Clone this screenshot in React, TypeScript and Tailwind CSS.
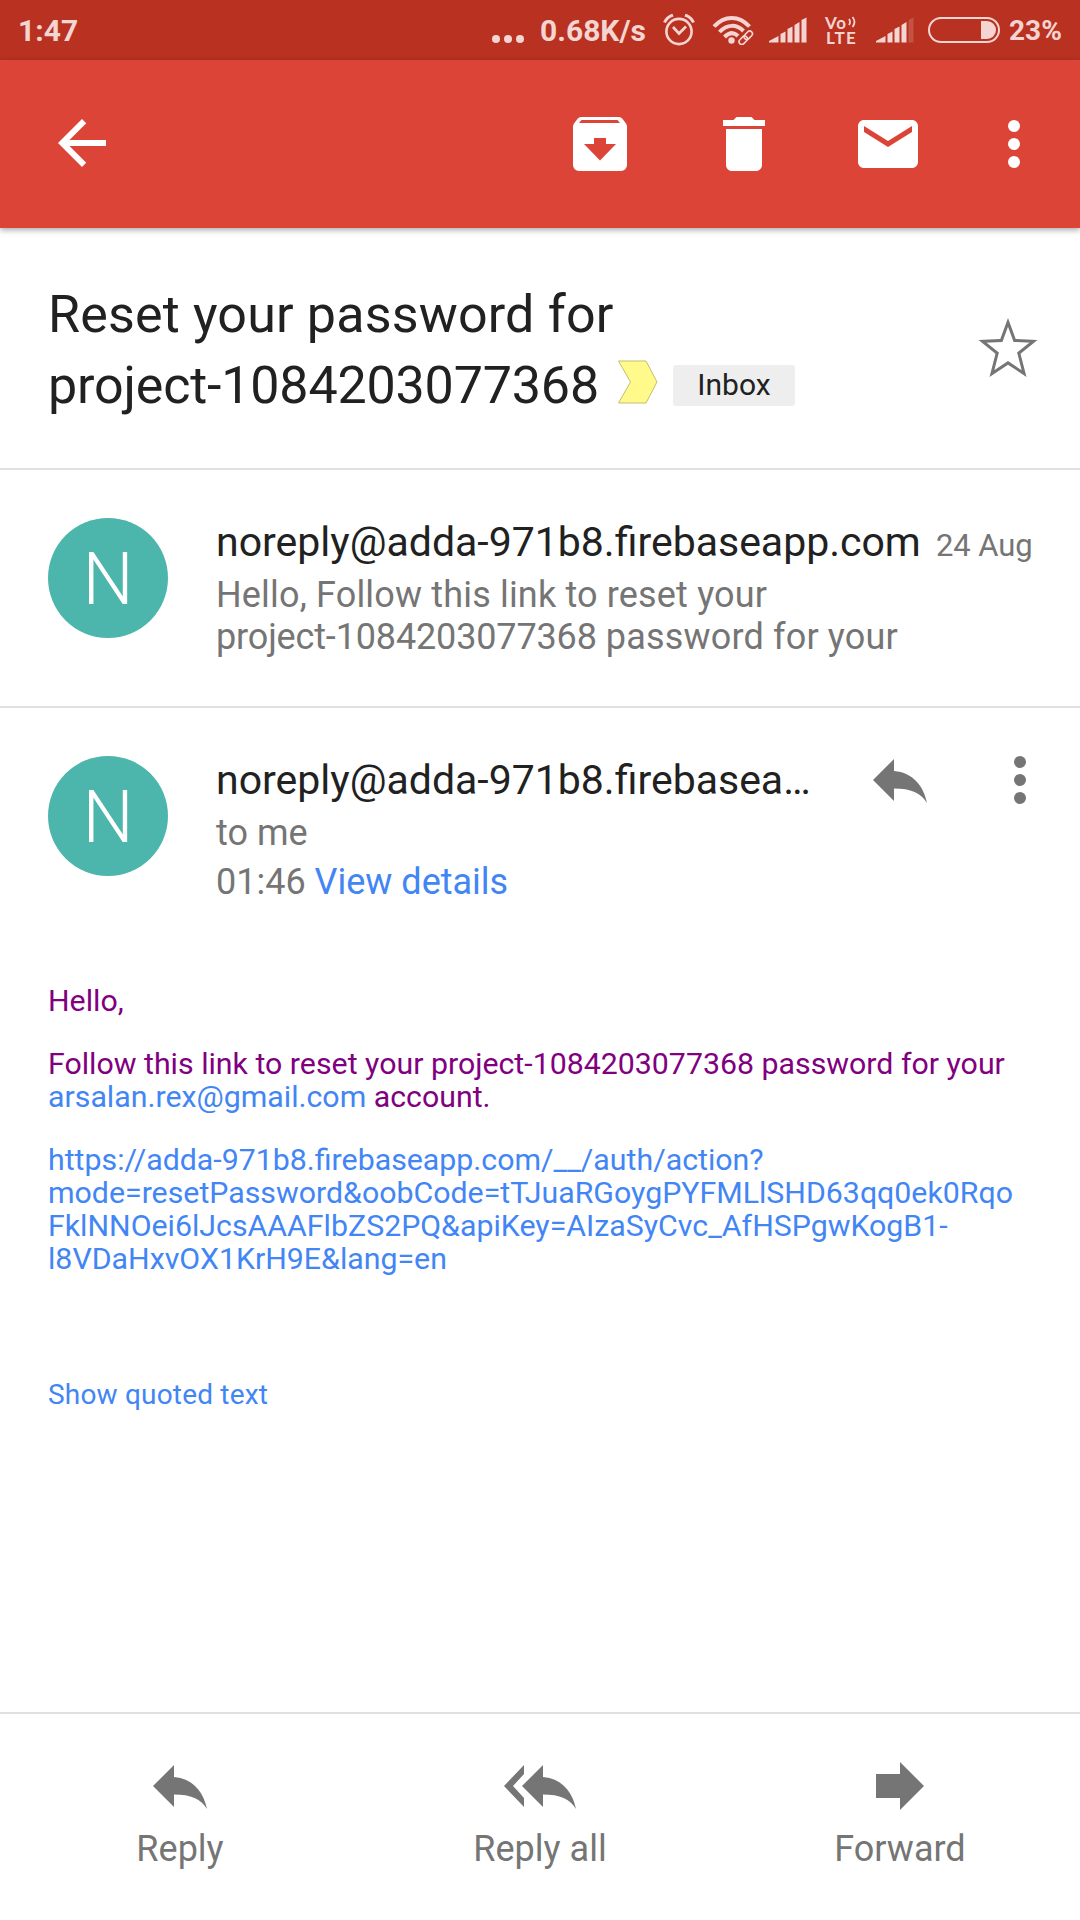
import React from "react";

type IconProps = { className?: string };

const ReplyShape = ({ className }: IconProps) => (
  <svg viewBox="0 0 54 48" className={className} fill="currentColor">
    <path d="M0 23L21 2v12c19 1.500 29.500 15 33 32c-6-10-16-14.500-33-14.500V44z" />
  </svg>
);

const MoreDots = ({ className }: IconProps) => (
  <svg viewBox="0 0 24 24" className={className} fill="currentColor">
    <circle cx="12" cy="6" r="2" />
    <circle cx="12" cy="12" r="2" />
    <circle cx="12" cy="18" r="2" />
  </svg>
);

const Signal = ({ weak }: { weak?: boolean }) => (
  <svg viewBox="0 0 38 26" className="h-[26px] w-[38px]" fill="currentColor">
    <path d="M0 25.500V24L9.500 19v6.500z" />
    <path d="M11.500 25.500V17l5-2.500v11z" />
    <path d="M18.500 25.500V12l5-2.500v16z" />
    <path d="M25.500 25.500V8l5-3v20.500z" />
    <path d="M32.500 25.500V3l5-2.500v25z" opacity={weak ? 0.2 : 1} />
  </svg>
);

const StatusBar = () => (
  <div className="flex h-[60px] items-center bg-[#b93221] pl-[18px] text-[#f4d5d2]">
    <span className="w-[474px] pt-px text-[30px] font-bold leading-[60px]">1:47</span>
    <svg viewBox="0 0 32 8" className="mt-[18px] h-2 w-8" fill="currentColor">
      <circle cx="4" cy="4" r="4" />
      <circle cx="16" cy="4" r="4" />
      <circle cx="28" cy="4" r="4" />
    </svg>
    <span className="ml-4 w-[105px] whitespace-nowrap pt-px text-[30px] font-bold leading-[60px]">0.68K/s</span>
    <svg viewBox="0 0 32 32" className="ml-[18px] h-8 w-8" fill="none" stroke="currentColor" strokeWidth="2.600">
      <circle cx="16" cy="17.500" r="12.600" />
      <path d="M10 13l6 6.500 7-7" />
      <path d="M1.500 8.500c1.500-3.500 4-6 8.500-7.500M30.500 8.500C29 5 26.500 2.500 22 1" strokeWidth="3" />
    </svg>
    <svg viewBox="0 0 42 30" className="ml-[17px] h-[30px] w-[42px]" fill="none" stroke="currentColor" strokeWidth="4">
      <path d="M2 11.500C12.500 0 27 0 37.500 11.500" />
      <path d="M7.500 17C15 9 24.500 9 31.500 16" />
      <path d="M12.500 22C17.500 17 22 17 26 21" />
      <circle cx="19.500" cy="25.500" r="3.200" fill="currentColor" stroke="none" />
      <g strokeWidth="1.600">
        <rect x="31.500" y="17.500" width="9.500" height="5.500" rx="2.750" transform="rotate(-45 36.250 20.250)" />
        <rect x="26.500" y="22.500" width="9.500" height="5.500" rx="2.750" transform="rotate(-45 31.250 25.250)" />
      </g>
    </svg>
    <div className="ml-[15px]"><Signal /></div>
    <div className="ml-[18px] flex w-[33px] flex-col font-['Lato'] text-[17px] font-bold">
      <div className="flex h-[15px] items-center leading-[15px]">
        <span className="w-[23px] tracking-[0.8px]">Vo</span>
        <svg viewBox="0 0 9 12" className="-mt-px h-3 w-[9px]" fill="none" stroke="currentColor" strokeWidth="1.800">
          <path d="M1 3q2 3 0 6M4.500 1q4 5 0 10" />
        </svg>
      </div>
      <span className="h-[15px] pl-px tracking-[1.2px] leading-[15px]">LTE</span>
    </div>
    <div className="ml-[18px]"><Signal weak /></div>
    <svg viewBox="0 0 72 26" className="ml-[14px] h-[26px] w-[72px]">
      <rect x="1" y="1" width="70" height="24" rx="12" fill="none" stroke="currentColor" strokeWidth="2" />
      <path d="M53 4h6a9 9 0 0 1 0 18h-6z" fill="currentColor" />
    </svg>
    <span className="ml-[9px] pt-px text-[28px] font-bold leading-[60px]">23%</span>
  </div>
);

const Toolbar = () => (
  <div className="relative z-10 flex h-[168px] items-start bg-[#dc4437] pt-12 text-white shadow-[0_2px_6px_rgba(0,0,0,0.35)]">
    <svg viewBox="0 0 24 24" className="-mt-px ml-[46px] size-[72px]" fill="currentColor">
      <path d="M20 11H7.830l5.590-5.590L12 4l-8 8 8 8 1.410-1.410L7.830 13H20v-2z" />
    </svg>
    <svg viewBox="0 0 72 72" className="ml-[446px] size-[72px]" fill="currentColor" fillRule="evenodd">
      <path d="M17 9h38q2 0 3.200 1.600L62 15.500q1 1.300 1 3V57a6 6 0 0 1-6 6H15a6 6 0 0 1-6-6V18.500q0-1.700 1-3l3.800-4.900Q15 9 17 9zM17.500 12L15 15h41l-2.500-3zM30 30v6H20l16 16.500L52 36H42v-6z" />
    </svg>
    <svg viewBox="0 0 24 24" className="ml-[72px] size-[72px]" fill="currentColor">
      <path d="M6 19c0 1.100.900 2 2 2h8c1.100 0 2-.900 2-2V7H6v12zM19 4h-3.500l-1-1h-5l-1 1H5v2h14V4z" />
    </svg>
    <svg viewBox="0 0 24 24" className="ml-[72px] size-[72px]" fill="currentColor">
      <path d="M20 4H4c-1.100 0-1.990.900-1.990 2L2 18c0 1.100.900 2 2 2h16c1.100 0 2-.900 2-2V6c0-1.100-.900-2-2-2zm0 4l-8 5-8-5V6l8 5 8-5v2z" />
    </svg>
    <MoreDots className="ml-[54px] size-[72px]" />
  </div>
);

const Subject = () => (
  <div className="flex h-[242px] border-b-2 border-[#e0e0e0] pl-12 pt-[51px]">
    <div className="w-[924px] text-[52px] leading-[71px] text-[#212121]">
      <div className="tracking-[0.17px]">Reset your password for</div>
      <div className="flex items-center">
        <span className="w-[570px] tracking-[-0.17px]">project-1084203077368</span>
        <svg viewBox="0 0 40 44" className="-mt-2 h-[44px] w-[40px]">
          <path d="M.5 1h27.500L39 22 28 43H.5L12.500 22z" fill="#fffa8a" stroke="#c3bf6c" />
        </svg>
        <span className="-mt-px ml-[15px] flex h-[41px] w-[122px] items-center justify-center rounded-[3px] bg-[#eeeeee] text-[30px] leading-[39px] pb-[2px]">Inbox</span>
      </div>
    </div>
    <svg viewBox="0 0 72 72" className="mt-[32px] size-[72px]">
      <defs>
        <clipPath id="star">
          <path d="M36 7l7.700 21 21.800 1-17 13.700L54.500 66 36 53.700 17.500 66l6-23.300L6.500 29l21.800-1z" />
        </clipPath>
      </defs>
      <path clipPath="url(#star)" fill="none" stroke="#757575" strokeWidth="6" d="M36 7l7.700 21 21.800 1-17 13.700L54.500 66 36 53.700 17.500 66l6-23.300L6.500 29l21.800-1z" />
    </svg>
  </div>
);

const Avatar = () => (
  <div className="flex size-[120px] shrink-0 items-center justify-center rounded-full bg-[#4db6ac] pt-[3px] text-[72px] font-light leading-none text-white">
    N
  </div>
);

const ReplyAllIcon = () => (
  <svg viewBox="0 0 72 48" className="relative top-px h-12 w-[72px]" fill="currentColor">
    <path d="M0 23L20 2v9L9 23l11 12v9zM18 23L39 2v12c19 1.500 29.500 15 33 32c-6-10-16-14.500-33-14.500V44z" />
  </svg>
);

const ForwardIcon = () => (
  <svg viewBox="0 0 48 48" className="h-12 w-12" fill="currentColor">
    <path d="M0 12h24V0l24 24-24 24V36H0z" />
  </svg>
);

const Action = ({ label, children }: { label: string; children: React.ReactNode }) => (
  <div className="flex flex-1 flex-col items-center pt-12">
    {children}
    <span className="mt-[18px] text-[36px] leading-[42px]">{label}</span>
  </div>
);

export default function App() {
  return (
    <div className="flex h-[1920px] w-[1080px] flex-col overflow-hidden bg-white font-['Roboto',sans-serif]">
      <StatusBar />
      <Toolbar />
      <Subject />
      <div className="flex h-[238px] border-b-2 border-[#e0e0e0] pl-12 pt-12">
        <Avatar />
        <div className="ml-12 whitespace-nowrap text-[36px] leading-[42px] text-[#757575]">
          <div className="mb-[7px] flex items-baseline">
            <span className="w-[720px] text-[41px] leading-[49px] text-[#212121]">noreply@adda-971b8.firebaseapp.com</span>
            <span className="text-[31px] leading-[36px] tracking-[-0.1px]">24 Aug</span>
          </div>
          <div className="tracking-[0.17px]">Hello, Follow this link to reset your</div>
          <div><span className="tracking-[-0.15px]">project-1084203077368</span><span className="tracking-[0.17px]"> password for your</span></div>
        </div>
      </div>
      <div className="flex h-[226px] pl-12 pt-12">
        <Avatar />
        <div className="ml-12 w-[657px] text-[36px] leading-[49px] text-[#757575]">
          <div className="text-[41px] text-[#212121]">noreply@adda-971b8.firebasea…</div>
          <div className="mt-[4px]">to me</div>
          <div>01:46 <span className="text-[#4285f4]">View details</span></div>
        </div>
        <ReplyShape className="mt-px h-12 w-[54px] text-[#757575]" />
        <MoreDots className="-mt-3 ml-[57px] size-[72px] text-[#757575]" />
      </div>
      <div className="grow pl-12 pt-[50px] text-[30.3px] leading-[33px] text-[#4285f4]">
        <p className="text-[#800080]">Hello,</p>
        <p className="mt-[30px] whitespace-nowrap text-[#800080]">
          Follow this link to reset your project-1084203077368 password for your<br />
          <span className="text-[#4285f4]">arsalan.rex@gmail.com</span> account.
        </p>
        <p className="mt-[30px] whitespace-nowrap">
          https://adda-971b8.firebaseapp.com/__/auth/action?<br />
          mode=resetPassword&amp;oobCode=tTJuaRGoygPYFMLlSHD63qq0ek0Rqo<br />
          FklNNOei6lJcsAAAFlbZS2PQ&amp;apiKey=AIzaSyCvc_AfHSPgwKogB1-<br />
          l8VDaHxvOX1KrH9E&amp;lang=en
        </p>
        <p className="mt-[103px] text-[28px] tracking-[0.19px]">Show quoted text</p>
      </div>
      <div className="flex h-[208px] border-t-2 border-[#e0e0e0] text-[#757575]">
        <Action label="Reply"><ReplyShape className="relative top-px h-12 w-[54px]" /></Action>
        <Action label="Reply all"><ReplyAllIcon /></Action>
        <Action label="Forward"><ForwardIcon /></Action>
      </div>
    </div>
  );
}
